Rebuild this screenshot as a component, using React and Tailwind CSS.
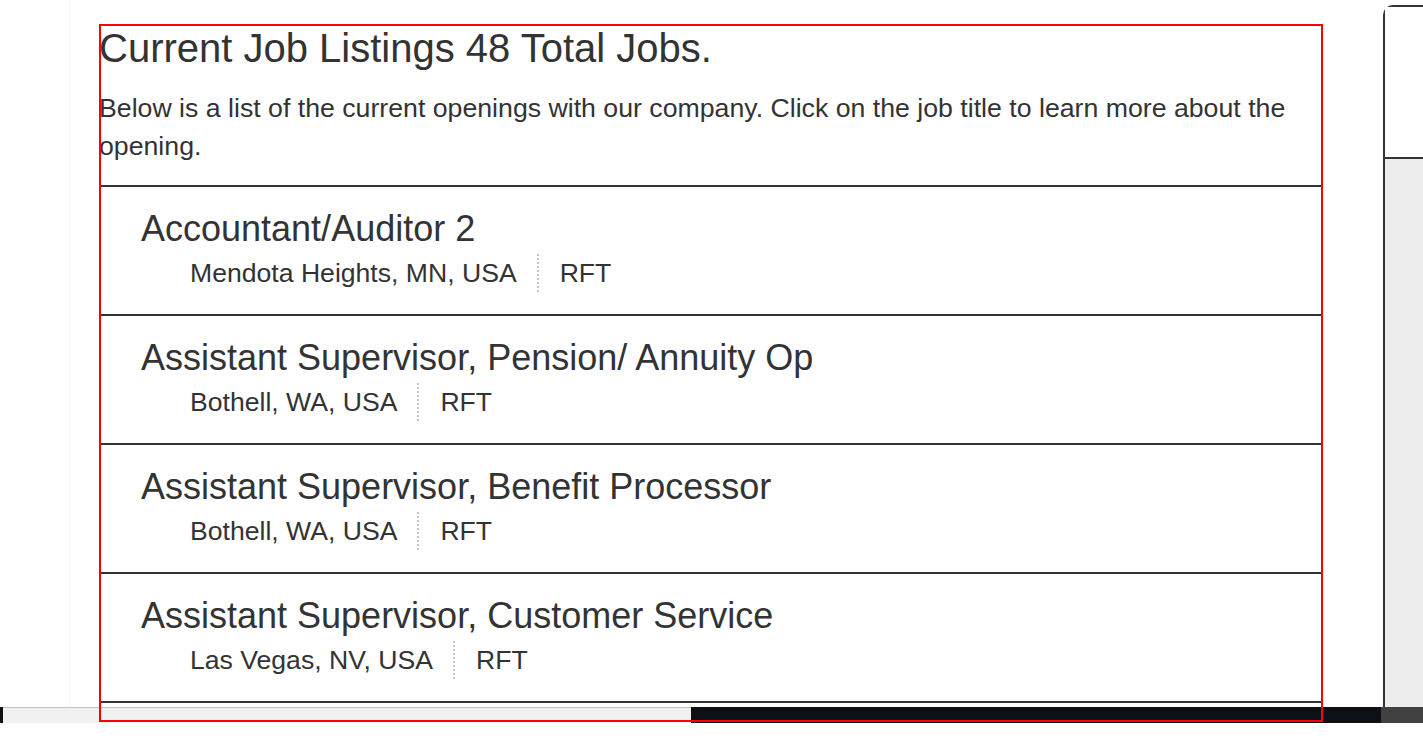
import React from "react";

const jobs = [
  { title: "Accountant/Auditor 2", location: "Mendota Heights, MN, USA", type: "RFT" },
  { title: "Assistant Supervisor, Pension/ Annuity Op", location: "Bothell, WA, USA", type: "RFT" },
  { title: "Assistant Supervisor, Benefit Processor", location: "Bothell, WA, USA", type: "RFT" },
  { title: "Assistant Supervisor, Customer Service", location: "Las Vegas, NV, USA", type: "RFT" },
];

const JobRow = ({ job }) => (
  <li className="border-t-2 border-[#333] pt-[22px] pb-[22px] last:border-b-2">
    <a href="#" className="block pl-[42px] text-[36px] leading-[40px] text-[#333]">
      {job.title}
    </a>
    <div className="mt-[5px] flex pl-[91px] text-[26.6px] leading-[38px] text-[#333]">
      <span className="border-r-2 border-dotted border-[#c4c4c4] pr-[20px]">
        {job.location}
      </span>
      <span className="pl-[21px]">{job.type}</span>
    </div>
  </li>
);

export default function App() {
  return (
    <div className="relative h-[748px] w-[1423px] overflow-hidden bg-white font-['Liberation_Sans',Arial,sans-serif] text-[#333]">
      <div className="flex h-[707px] overflow-hidden">
        <div className="w-[69px] shrink-0" />
        <div className="w-px shrink-0 bg-[#f7f7f7]" />
        <div className="w-[29px] shrink-0" />

        {/* Job listings */}
        <main className="w-[1224px] shrink-0 pt-[26px]">
          <h1 className="mb-[19px] text-[40px] leading-[44px]">
            Current Job Listings 48 Total Jobs.
          </h1>
          <p className="mb-[20px] text-[26.7px] leading-[38px]">
            Below is a list of the current openings with our company. Click on the job title to learn more about the opening.
          </p>
          <ul>
            {jobs.map((job) => (
              <JobRow key={job.title} job={job} />
            ))}
          </ul>
        </main>

        <div className="w-[60px] shrink-0" />

        {/* Side panel */}
        <aside className="mt-[5px] flex flex-1 flex-col rounded-tl-[10px] border-l-2 border-t-2 border-[#333]">
          <div className="h-[152px] border-b-2 border-[#333] bg-white" />
          <div className="flex-1 bg-[#ededed]" />
        </aside>
      </div>

      {/* Bottom bar */}
      <div className="flex h-[16px]">
        <div className="w-[3px] bg-[#111]" />
        <div className="w-[688px] border-t border-[#c2c2c2] bg-[#f1f1f1]" />
        <div className="w-[690px] bg-[#0d1014]" />
        <div className="flex-1 bg-[#414141]" />
      </div>

      {/* Highlight outline */}
      <div className="pointer-events-none absolute left-[99px] top-[24px] h-[698px] w-[1224px] border-2 border-[#ff0000]" />
    </div>
  );
}
